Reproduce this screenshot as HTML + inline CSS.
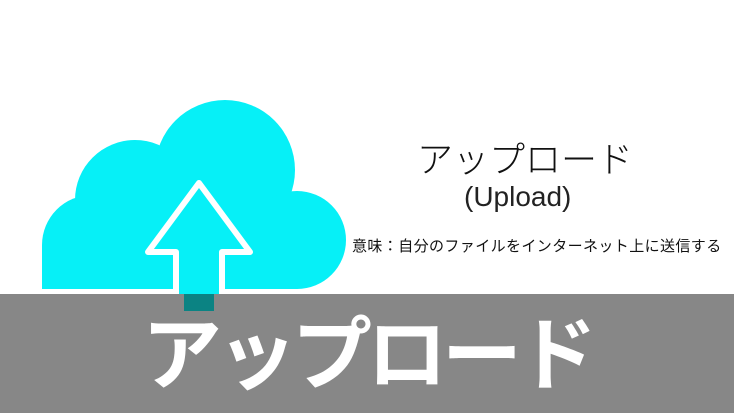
<!DOCTYPE html>
<html><head><meta charset="utf-8"><style>
html,body{margin:0;padding:0;width:734px;height:413px;overflow:hidden;background:#fff;font-family:"Liberation Sans","Noto Sans CJK JP",sans-serif;position:relative}
.t{position:absolute;color:#111;white-space:nowrap}
.band{position:absolute;left:0;top:294px;width:734px;height:119px;background:#878787}
.big{position:absolute;left:142px;top:309px;font-size:80px;font-weight:bold;color:#fff;letter-spacing:-5px;line-height:1;font-family:"Noto Sans CJK JP",sans-serif;white-space:nowrap}
</style></head><body>
<svg width="734" height="413" style="position:absolute;left:0;top:0">
<defs><clipPath id="c"><rect x="0" y="0" width="734" height="289"/></clipPath></defs>
<g fill="#06f0f7" clip-path="url(#c)">
<circle cx="92" cy="245" r="50"/>
<circle cx="135" cy="200" r="60"/>
<circle cx="225" cy="170" r="70"/>
<circle cx="297" cy="240" r="49"/>
<rect x="92" y="200" width="205" height="89"/>
<rect x="42" y="245" width="100" height="44"/>
</g>
<path d="M199,183 L250,252 L222,252 L222,294 L176,294 L176,252 L148,252 Z" fill="#06f0f7" stroke="#fff" stroke-width="6" stroke-linejoin="round"/>
<rect x="179" y="286" width="40" height="9" fill="#06f0f7"/>
</svg>
<div class="t" style="left:417px;top:131px;font-size:36px;font-family:'Noto Sans CJK JP',sans-serif;font-weight:300">アップロード</div>
<div class="t" style="left:464px;top:181px;font-size:28px;font-family:'Liberation Sans',sans-serif;font-weight:normal;color:#222">(Upload)</div>
<div class="t" style="left:352px;top:235px;font-size:15px;letter-spacing:0.4px;font-family:'Noto Sans CJK JP',sans-serif">意味：自分のファイルをインターネット上に送信する</div>
<div class="band"></div>
<div style="position:absolute;left:184px;top:294px;width:30px;height:17px;background:#0b8383"></div>
<div class="big">アップロード</div>
</body></html>
